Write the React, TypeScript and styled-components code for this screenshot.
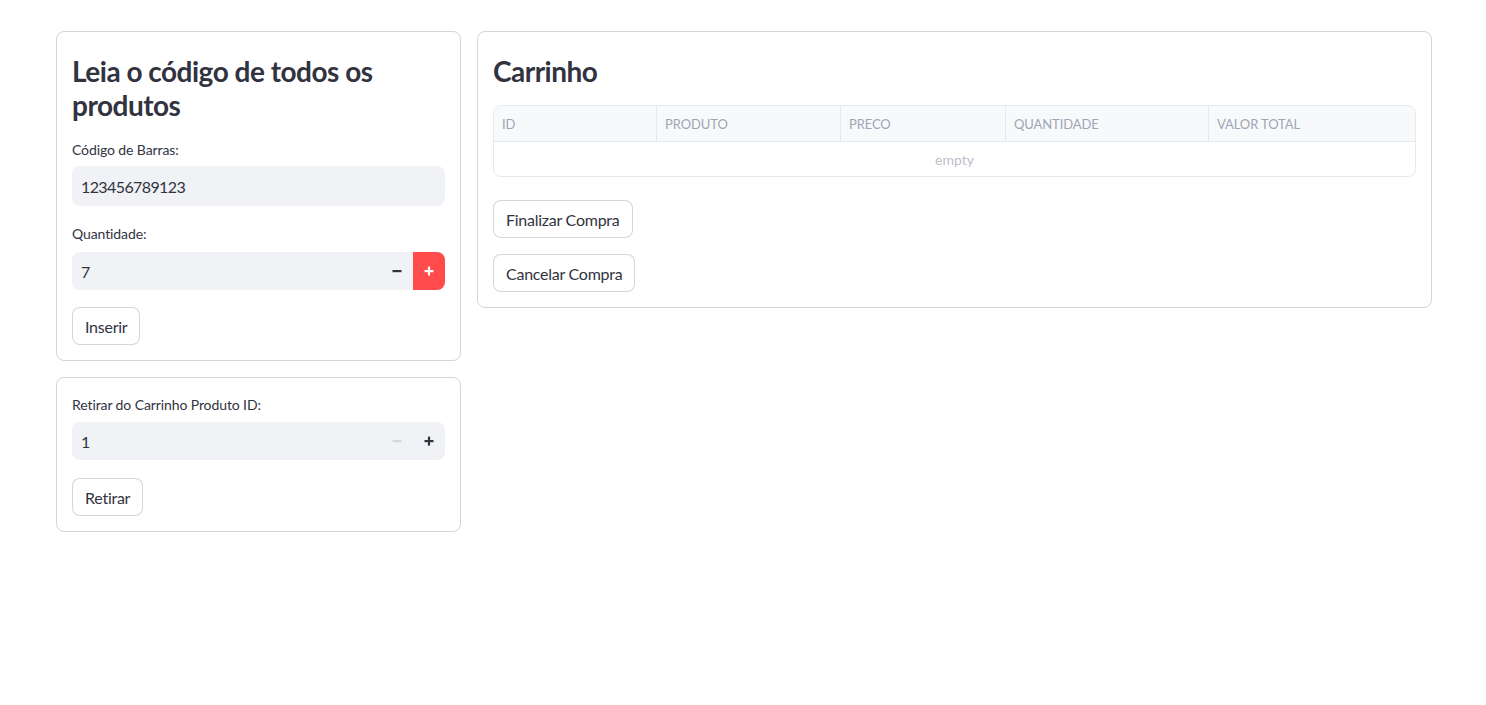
import React, { useState } from "react";
import styled, { createGlobalStyle } from "styled-components";

const GlobalStyle = createGlobalStyle`
  body {
    margin: 0;
    background: #ffffff;
    font-family: "Source Sans Pro", Lato, "Noto Sans", sans-serif;
    color: #31333f;
  }
  * {
    box-sizing: border-box;
  }
`;

const Page = styled.div`
  display: flex;
  align-items: flex-start;
  gap: 16px;
  padding: 31px 54px 0 56px;
  width: 1486px;
`;

const LeftColumn = styled.div`
  display: flex;
  flex-direction: column;
  gap: 16px;
  width: 405px;
  flex-shrink: 0;
`;

const Card = styled.div<{ $grow?: boolean }>`
  display: flex;
  flex-direction: column;
  border: 1px solid rgba(49, 51, 63, 0.2);
  border-radius: 8px;
  padding: 15px;
  ${(p) => (p.$grow ? "flex: 1;" : "")}
`;

const Heading = styled.h3`
  margin: 7px 0 0;
  font-size: 28px;
  line-height: 34px;
  font-weight: 700;
  color: #31333f;
  letter-spacing: -0.5px;
`;

const Label = styled.label<{ $top?: number; $bottom?: number }>`
  display: block;
  font-size: 14px;
  line-height: 24px;
  margin-top: ${(p) => p.$top ?? 0}px;
  margin-bottom: ${(p) => p.$bottom ?? 4}px;
  color: #31333f;
  letter-spacing: -0.1px;
`;

const TextInput = styled.input`
  height: 40px;
  width: 100%;
  border: none;
  outline: none;
  border-radius: 8px;
  background: #f0f2f6;
  padding: 0 9px;
  font-family: inherit;
  font-size: 16px;
  letter-spacing: -0.6px;
  color: #31333f;
`;

const NumberWrap = styled.div`
  display: flex;
  height: 38px;
  border-radius: 8px;
  background: #f0f2f6;
  overflow: hidden;
`;

const NumberField = styled.input`
  flex: 1;
  min-width: 0;
  border: none;
  outline: none;
  background: transparent;
  padding: 0 9px;
  font-family: inherit;
  font-size: 16px;
  color: #31333f;
`;

const StepButton = styled.button<{ $active?: boolean; $disabled?: boolean }>`
  width: 32px;
  border: none;
  padding: 0;
  display: flex;
  align-items: center;
  justify-content: center;
  background: ${(p) => (p.$active ? "#ff4b4b" : "transparent")};
  color: ${(p) => (p.$active ? "#ffffff" : p.$disabled ? "#d5d7de" : "#31333f")};
  cursor: ${(p) => (p.$disabled ? "not-allowed" : "pointer")};
`;

const Button = styled.button<{ $top?: number }>`
  align-self: flex-start;
  height: 38px;
  margin-top: ${(p) => p.$top ?? 16}px;
  padding: 0 12px;
  background: #ffffff;
  border: 1px solid rgba(49, 51, 63, 0.2);
  border-radius: 8px;
  font-family: inherit;
  font-size: 16px;
  letter-spacing: -0.25px;
  color: #31333f;
  cursor: pointer;
`;

const Table = styled.div`
  margin-top: 17px;
  border: 1px solid #e6e9ef;
  border-radius: 8px;
  overflow: hidden;
`;

const HeaderRow = styled.div`
  display: grid;
  grid-template-columns: 162px 184px 165px 203px 1fr;
  height: 36px;
  background: #f8f9fb;
  border-bottom: 1px solid #e6e9ef;
`;

const HeaderCell = styled.div<{ $first?: boolean }>`
  display: flex;
  align-items: center;
  padding-left: 8px;
  font-size: 13px;
  letter-spacing: -0.1px;
  color: #a0a5b3;
  border-left: ${(p) => (p.$first ? "none" : "1px solid #e6e9ef")};
`;

const EmptyRow = styled.div`
  height: 34px;
  display: flex;
  align-items: center;
  justify-content: center;
  font-size: 14px;
  color: #bcc0c9;
`;

const Minus = () => (
  <svg width="10" height="10" viewBox="0 0 10 10">
    <rect x="0.5" y="4" width="9" height="2.2" fill="currentColor" />
  </svg>
);

const Plus = () => (
  <svg width="10" height="10" viewBox="0 0 10 10">
    <rect x="0.5" y="4" width="9" height="2.2" fill="currentColor" />
    <rect x="3.9" y="0.6" width="2.2" height="9" fill="currentColor" />
  </svg>
);

const columns = ["ID", "PRODUTO", "PRECO", "QUANTIDADE", "VALOR TOTAL"];

export default function App() {
  const [code, setCode] = useState("123456789123");
  const [qty, setQty] = useState(7);
  const [removeId, setRemoveId] = useState(1);

  return (
    <>
      <GlobalStyle />
      <Page>
        <LeftColumn>
          <Card>
            <Heading>Leia o código de todos os produtos</Heading>
            <Label $top={16}>Código de Barras:</Label>
            <TextInput value={code} onChange={(e) => setCode(e.target.value)} />
            <Label $top={16} $bottom={6}>
              Quantidade:
            </Label>
            <NumberWrap>
              <NumberField
                value={qty}
                onChange={(e) => setQty(Number(e.target.value) || 0)}
              />
              <StepButton onClick={() => setQty(Math.max(0, qty - 1))}>
                <Minus />
              </StepButton>
              <StepButton $active onClick={() => setQty(qty + 1)}>
                <Plus />
              </StepButton>
            </NumberWrap>
            <Button $top={17}>Inserir</Button>
          </Card>
          <Card>
            <Label $bottom={5}>Retirar do Carrinho Produto ID:</Label>
            <NumberWrap>
              <NumberField
                value={removeId}
                onChange={(e) => setRemoveId(Number(e.target.value) || 1)}
              />
              <StepButton
                $disabled={removeId <= 1}
                onClick={() => setRemoveId(Math.max(1, removeId - 1))}
              >
                <Minus />
              </StepButton>
              <StepButton onClick={() => setRemoveId(removeId + 1)}>
                <Plus />
              </StepButton>
            </NumberWrap>
            <Button $top={18}>Retirar</Button>
          </Card>
        </LeftColumn>
        <Card $grow>
          <Heading>Carrinho</Heading>
          <Table>
            <HeaderRow>
              {columns.map((c, i) => (
                <HeaderCell key={c} $first={i === 0}>
                  {c}
                </HeaderCell>
              ))}
            </HeaderRow>
            <EmptyRow>empty</EmptyRow>
          </Table>
          <Button $top={23}>Finalizar Compra</Button>
          <Button $top={16}>Cancelar Compra</Button>
        </Card>
      </Page>
    </>
  );
}
